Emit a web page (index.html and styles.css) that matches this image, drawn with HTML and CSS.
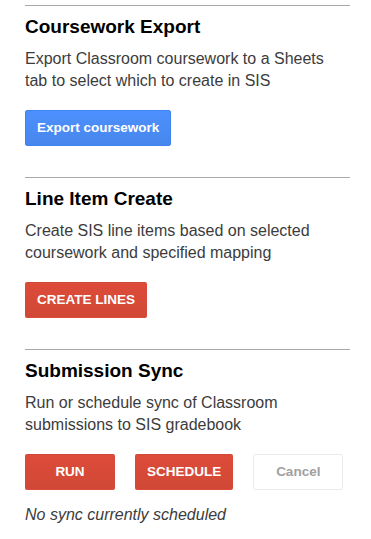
FILE: index.html
```html
<!DOCTYPE html>
<html lang="en">
<head>
    <meta charset="UTF-8">
    <meta name="viewport" content="width=device-width, initial-scale=1.0">
    <title>SIS Sync</title>
    <link rel="stylesheet" href="styles.css">
</head>
<body>
    <div id="sidebar">
        <div class="block">
            <h2>Coursework Export</h2>
            <p class="desc">Export Classroom coursework to a Sheets tab to select which to create in SIS</p>
            <div class="actions">
                <button class="action" id="export-btn">Export coursework</button>
            </div>
        </div>

        <div class="block">
            <h2>Line Item Create</h2>
            <p class="desc">Create SIS line items based on selected coursework and specified mapping</p>
            <div class="actions">
                <button class="create" id="create-btn">CREATE LINES</button>
            </div>
        </div>

        <div class="block">
            <h2>Submission Sync</h2>
            <p class="desc">Run or schedule sync of Classroom submissions to SIS gradebook</p>
            <div class="actions">
                <button class="create wide" id="run-btn">RUN</button>
                <button class="create wide" id="schedule-btn">SCHEDULE</button>
                <button class="wide" id="cancel-btn" disabled>Cancel</button>
            </div>
            <p class="status" id="sync-status">No sync currently scheduled</p>
        </div>
    </div>
</body>
</html>
```

FILE: styles.css
```css
body {
    margin: 0;
    padding-top: 5px;
    font-family: "Liberation Sans", Arial, sans-serif;
    color: #3c3c3c;
    background: #fff;
}
#sidebar {
    width: 325px;
    padding-left: 25px;
}
.block {
    border-top: 1px solid #a8a8a8;
    padding-top: 10px;
    padding-bottom: 31px;
}
.block:last-child {
    padding-bottom: 0;
}
h2 {
    margin: 0 0 10px 0;
    font-size: 19px;
    line-height: 22px;
    font-weight: bold;
    color: #000;
}
.desc {
    margin: 0;
    font-size: 16px;
    line-height: 22px;
    color: #3c3c3c;
}
.actions {
    display: flex;
    gap: 20px;
    margin-top: 18px;
}
button {
    height: 36px;
    padding: 0 11px;
    font-family: "Liberation Sans", Arial, sans-serif;
    font-size: 13.5px;
    font-weight: bold;
    line-height: 34px;
    border-radius: 2px;
    border: 1px solid #dcdcdc;
    background: #fff;
    color: #444;
    cursor: pointer;
}
button.wide {
    min-width: 90px;
}
button.action {
    background: linear-gradient(#4d90fe, #4787ed);
    border: 1px solid #3f84f0;
    color: #fff;
}
button.create {
    background: linear-gradient(#dd4b39, #d14836);
    border: 1px solid transparent;
    color: #fff;
}
button:disabled {
    border-color: #ebebeb;
    color: #a0a0a0;
    cursor: default;
}
.status {
    margin: 14px 0 0 0;
    font-size: 16px;
    line-height: 22px;
    font-style: italic;
    color: #3c3c3c;
}
```
